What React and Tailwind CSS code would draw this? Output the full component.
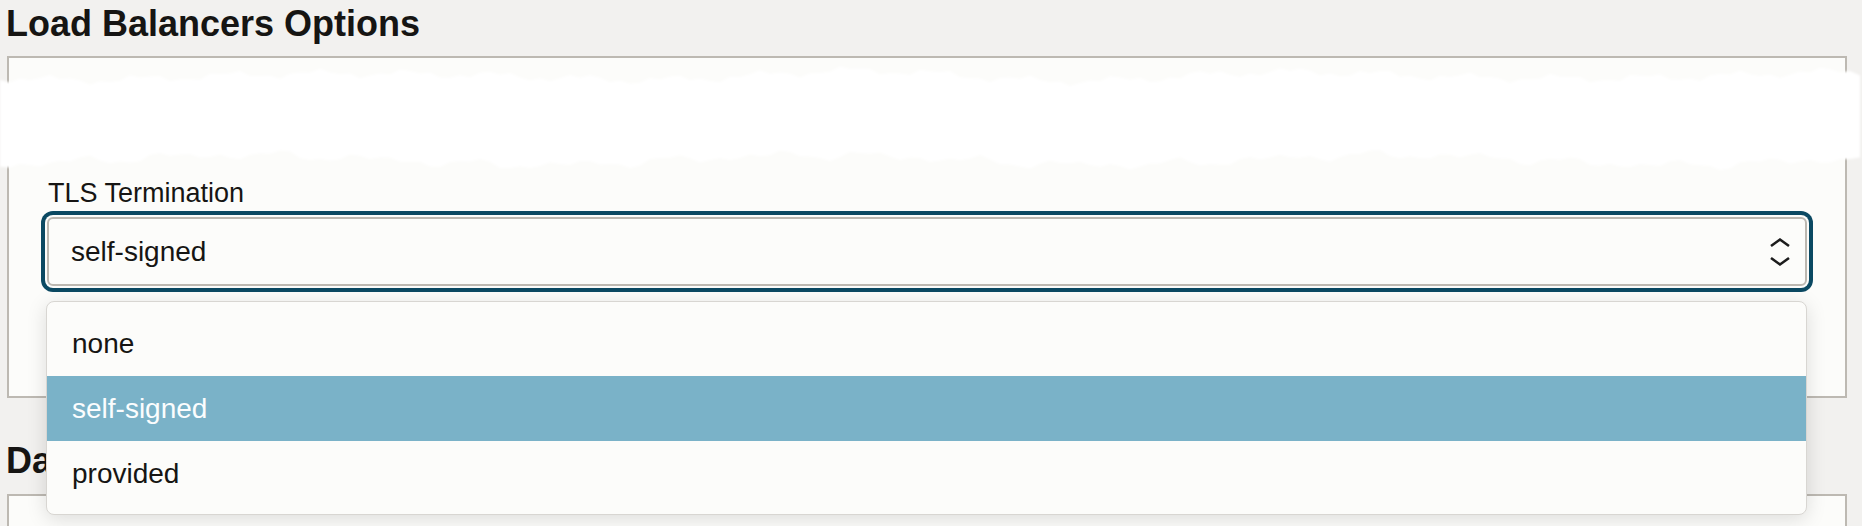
import React from "react";

function Smear() {
  const W = 1862;
  const top = [];
  const bot = [];
  for (let x = 0; x <= W; x += 10) {
    const t = 18 + 4 * Math.sin(x * 0.013) + 3 * Math.sin(x * 0.071 + 1) + 2 * Math.sin(x * 0.23) + 1.5 * Math.sin(x * 0.61 + 2);
    const b = 102 + 5 * Math.sin(x * 0.011 + 2) + 3 * Math.sin(x * 0.063) + 2 * Math.sin(x * 0.19 + 0.5) + 1.5 * Math.sin(x * 0.53 + 1);
    top.push([x, t]);
    bot.push([x, b]);
  }
  let d = `M0 ${top[0][1].toFixed(1)} `;
  top.forEach(([x, y]) => (d += `L${x} ${y.toFixed(1)} `));
  for (let i = bot.length - 1; i >= 0; i--) d += `L${bot[i][0]} ${bot[i][1].toFixed(1)} `;
  d += "Z";
  return (
    <svg
      className="absolute left-0 top-[58px] pointer-events-none"
      width="1862"
      height="125"
      viewBox="0 0 1862 125"
    >
      <defs>
        <filter id="soft" x="-5%" y="-20%" width="110%" height="140%">
          <feGaussianBlur stdDeviation="1.2" />
        </filter>
      </defs>
      <path d={d} fill="#ffffff" filter="url(#soft)" />
    </svg>
  );
}

function Chevrons() {
  return (
    <svg width="22" height="30" viewBox="0 0 22 30" fill="none" stroke="#1c1c1c" strokeWidth="2.6">
      <path d="M2 9 L11 2.5 L20 9" />
      <path d="M2 21 L11 27.5 L20 21" />
    </svg>
  );
}

export default function App() {
  const options = ["none", "self-signed", "provided"];
  return (
    <div className="relative w-[1862px] h-[526px] overflow-hidden bg-[#f2f1ef] font-['Liberation_Sans',Arial,sans-serif] text-[#161513] pl-[7px] pr-[15px] pt-[3px]">
      <h2 className="text-[36px] font-bold leading-[42px] -ml-[1px] mb-[11px]">Load Balancers Options</h2>
      <section className="border-2 border-[#bdb9b2] bg-[#fcfcfa] px-[38px] pb-[110px]">
        <div className="h-[120px]" />
        <label className="block text-[27px] leading-[31px] mb-[8px] pl-[1px]">TLS Termination</label>
        <div className="relative">
          <div className="flex items-center h-[69px] border-2 border-[#bcb8b1] rounded-[6px] bg-[#fcfcfa] pl-[22px] pr-[14px] shadow-[0_0_0_2px_#fcfcfa,0_0_0_6px_#0b4962] text-[28px]">
            <span className="flex-1">self-signed</span>
            <Chevrons />
          </div>
          <ul className="absolute left-[-1px] right-0 top-[84px] z-10 border border-[#d8d6d2] rounded-[8px] bg-[#fcfcfa] pt-[9px] pb-[8px] shadow-[0_4px_20px_rgba(0,0,0,0.13)] text-[28px]">
            {options.map((o) => (
              <li
                key={o}
                className={
                  o === "self-signed"
                    ? "h-[65px] flex items-center pl-[25px] bg-[#7ab2c8] text-[#fbfdfe]"
                    : "h-[65px] flex items-center pl-[25px]"
                }
              >
                {o}
              </li>
            ))}
          </ul>
        </div>
      </section>
      <h2 className="text-[36px] font-bold leading-[42px] -ml-[1px] mt-[42px] mb-[12px]">Database Options</h2>
      <section className="border-2 border-[#bdb9b2] bg-[#fcfcfa] h-[100px]" />
      <Smear />
    </div>
  );
}
